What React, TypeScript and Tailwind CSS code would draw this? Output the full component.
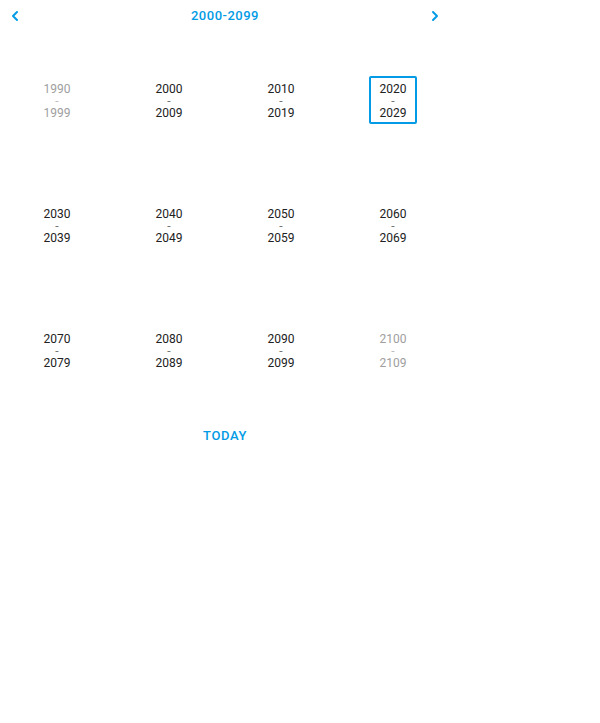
import React from 'react';

const decades = [
  { from: 1990, to: 1999, outside: true },
  { from: 2000, to: 2009 },
  { from: 2010, to: 2019 },
  { from: 2020, to: 2029, current: true },
  { from: 2030, to: 2039 },
  { from: 2040, to: 2049 },
  { from: 2050, to: 2059 },
  { from: 2060, to: 2069 },
  { from: 2070, to: 2079 },
  { from: 2080, to: 2089 },
  { from: 2090, to: 2099 },
  { from: 2100, to: 2109, outside: true },
];

function Chevron({ dir }: { dir: 'left' | 'right' }) {
  return (
    <svg width="10" height="12" viewBox="0 0 10 12" fill="none">
      <path
        d={dir === 'left' ? 'M7 2 L3 6 L7 10' : 'M3 2 L7 6 L3 10'}
        stroke="#039be5"
        strokeWidth="2"
        strokeLinecap="round"
        strokeLinejoin="round"
      />
    </svg>
  );
}

export default function App() {
  return (
    <div className="w-[450px] bg-white font-['Roboto',sans-serif]">
      {/* Header */}
      <div className="h-[31px] flex items-center justify-between px-[10px] pt-[1px]">
        <button className="w-[10px] flex items-center justify-center -mt-[1px]">
          <Chevron dir="left" />
        </button>
        <span className="text-[13px] font-medium tracking-[0.5px] text-[#039be5]">2000-2099</span>
        <button className="w-[10px] flex items-center justify-center -mt-[1px]">
          <Chevron dir="right" />
        </button>
      </div>

      {/* Decade grid */}
      <div className="grid grid-cols-4 grid-rows-[repeat(3,125px)] mt-[6px] px-[1px]">
        {decades.map((d) => (
          <div key={d.from} className="flex items-center justify-center">
            <div
              className={`w-[48px] h-[48px] rounded-[2px] flex flex-col items-center justify-center pt-[2px] text-[12px] leading-[12px] ${
                d.current ? 'border-2 border-[#039be5]' : ''
              } ${d.outside ? 'text-[#9e9e9e]' : 'text-[#212121]'}`}
            >
              <span>{d.from}</span>
              <span className={d.outside ? 'text-[#bdbdbd]' : 'text-[#757575]'}>-</span>
              <span>{d.to}</span>
            </div>
          </div>
        ))}
      </div>

      {/* Footer */}
      <div className="h-[48px] flex items-center justify-center">
        <span className="text-[13px] font-medium tracking-[0.6px] text-[#039be5]">TODAY</span>
      </div>
    </div>
  );
}
